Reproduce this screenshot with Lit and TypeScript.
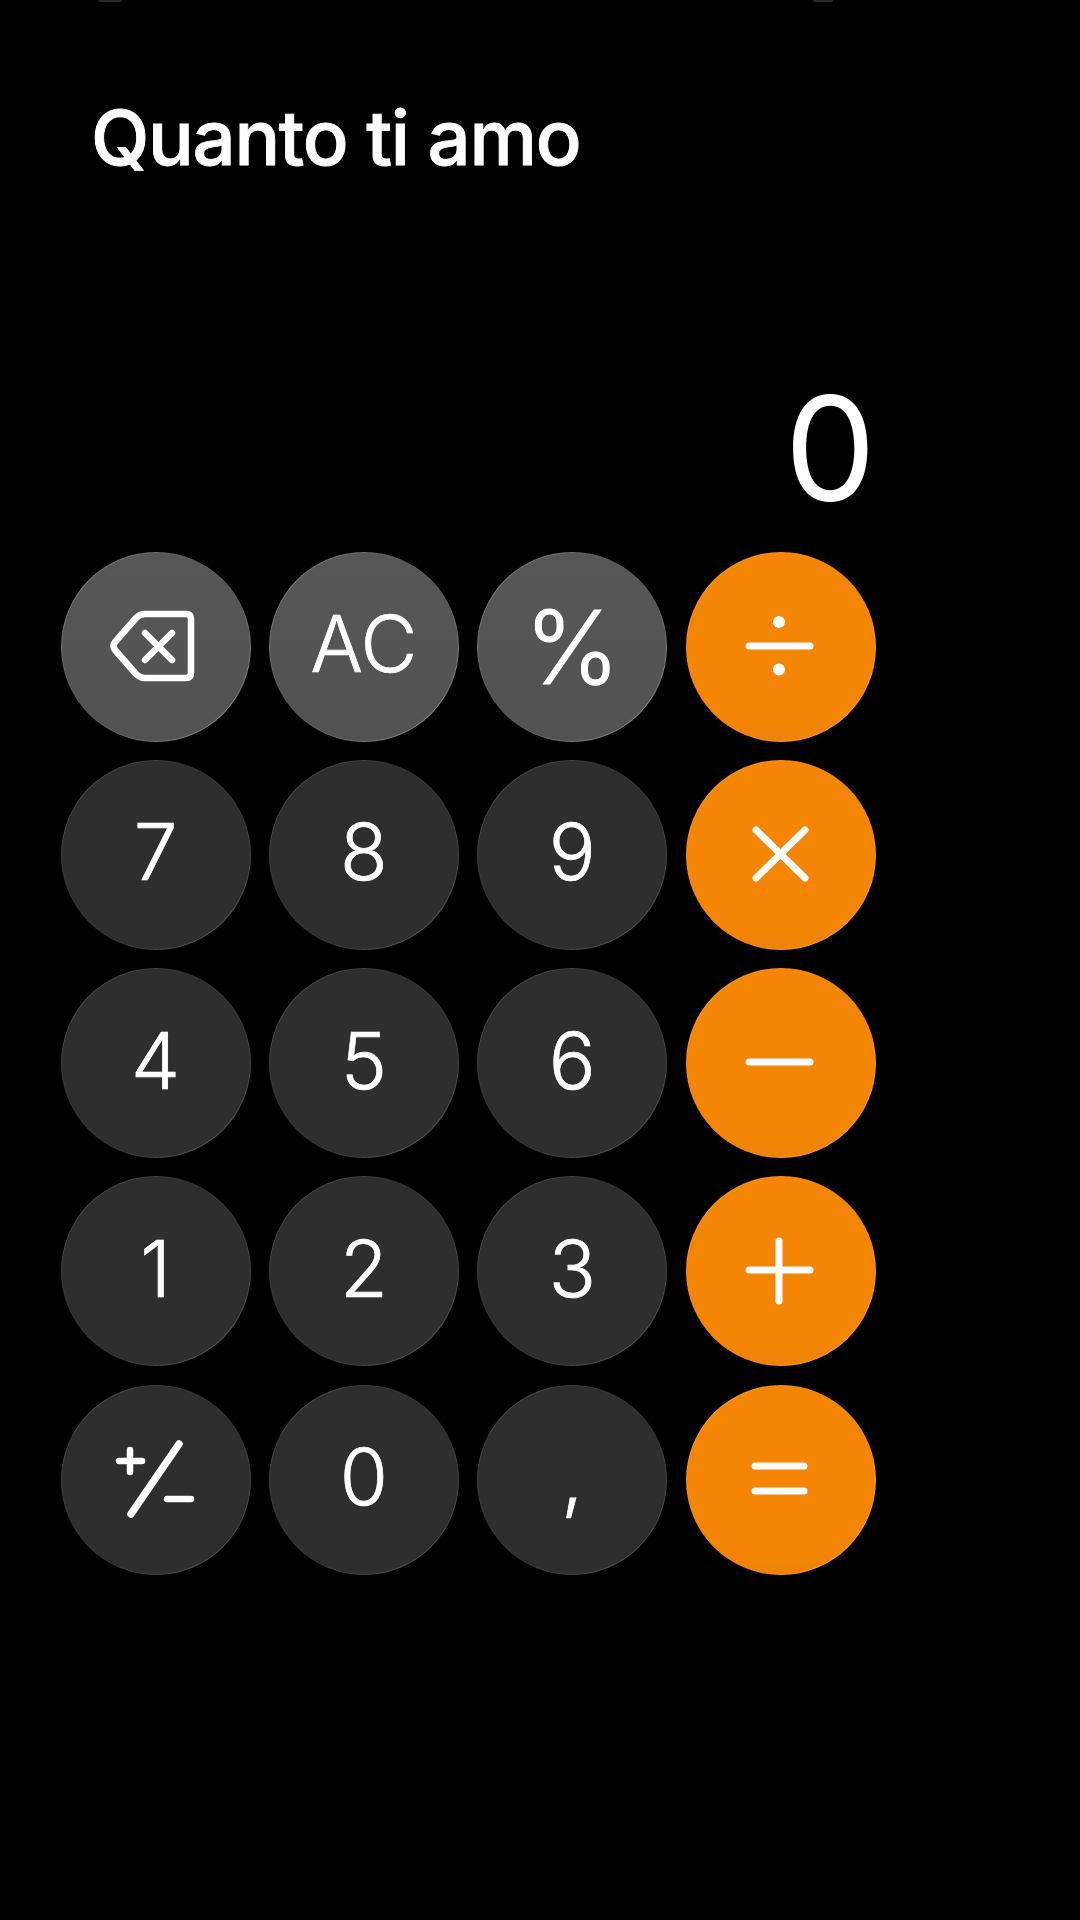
import { LitElement, html, css, svg } from 'lit';
import { customElement } from 'lit/decorators.js';

type Key = { kind: 'fn' | 'num' | 'op'; label?: string; icon?: unknown; cls?: string };

const line = (x1: number, y1: number, x2: number, y2: number, w = 7) =>
  svg`<line x1=${x1} y1=${y1} x2=${x2} y2=${y2} stroke="#fff" stroke-width=${w} stroke-linecap="round"></line>`;

const dot = (cx: number, cy: number, r: number) => svg`<circle cx=${cx} cy=${cy} r=${r} fill="#fff"></circle>`;

// all icons are drawn in the 190x190 box of the key
const icons = {
  back: svg`
    <path d="M55 91 L76 67 Q80 63 85 63 H126 Q131 63 131 68 V122 Q131 127 126 127 H85 Q80 127 76 123 L55 99 Q52 95 55 91 Z" fill="none" stroke="#fff" stroke-width="6.5" stroke-linejoin="round"></path>
    ${line(85, 82, 112, 109, 6.5)}
    ${line(112, 82, 85, 109, 6.5)}`,
  plusMinus: svg`
    ${line(59, 77, 82, 77, 6.5)}
    ${line(70, 66, 70, 88, 6.5)}
    ${line(119, 60, 71, 130, 7.5)}
    ${line(107, 115, 131, 115, 6.5)}`,
  div: svg`${line(64, 95, 125, 95)}${dot(94, 71, 6)}${dot(94, 118.5, 6)}`,
  mul: svg`${line(71, 71, 120, 119, 7)}${line(120, 71, 71, 119, 7)}`,
  minus: svg`${line(64, 94, 125, 94)}`,
  plus: svg`${line(64, 94, 125, 94)}${line(94, 65, 94, 125)}`,
  eq: svg`${line(70, 82, 119, 82)}${line(70, 107, 119, 107)}`,
};

const keys: Key[] = [
  { kind: 'fn', icon: icons.back },
  { kind: 'fn', label: 'AC' },
  { kind: 'fn', label: '%', cls: 'pct' },
  { kind: 'op', icon: icons.div },
  { kind: 'num', label: '7' },
  { kind: 'num', label: '8' },
  { kind: 'num', label: '9' },
  { kind: 'op', icon: icons.mul },
  { kind: 'num', label: '4' },
  { kind: 'num', label: '5' },
  { kind: 'num', label: '6' },
  { kind: 'op', icon: icons.minus },
  { kind: 'num', label: '1' },
  { kind: 'num', label: '2' },
  { kind: 'num', label: '3' },
  { kind: 'op', icon: icons.plus },
  { kind: 'num', icon: icons.plusMinus },
  { kind: 'num', label: '0' },
  { kind: 'num', label: ',' },
  { kind: 'op', icon: icons.eq },
];

@customElement('app-root')
export class AppRoot extends LitElement {
  static styles = css`
    :host {
      display: block;
      position: relative;
      width: 1080px;
      height: 1920px;
      background: #000;
      color: #fff;
      font-family: Inter, 'Noto Sans', sans-serif;
      overflow: hidden;
    }

    .notch {
      position: absolute;
      top: 0;
      width: 24px;
      height: 2px;
      border-radius: 0 0 8px 8px;
      background: #2a2a2a;
    }

    .notch.left {
      left: 98px;
    }

    .notch.right {
      left: 813px;
      width: 20px;
    }

    .title {
      margin: 0;
      padding: 97px 0 0 91px;
      font-size: 76px;
      font-weight: 500;
      -webkit-text-stroke: 0.9px #fff;
      line-height: 80px;
      letter-spacing: -1.3px;
    }

    .display {
      margin-top: 208px;
      width: 876px;
      box-sizing: border-box;
      text-align: right;
      font-size: 145px;
      font-weight: 400;
      line-height: 128px;
    }

    .pad {
      display: grid;
      grid-template-columns: repeat(4, 190px);
      grid-auto-rows: 190px;
      gap: 18.25px 18.4px;
      margin: 38.5px 0 0 60.5px;
    }

    .key {
      display: flex;
      align-items: center;
      justify-content: center;
      box-sizing: border-box;
      width: 190px;
      height: 190px;
      padding-bottom: 5px;
      border-radius: 50%;
      border: 1.5px solid transparent;
      font-size: 78px;
      font-weight: 300;
      -webkit-text-stroke: 0.7px #fff;
      line-height: 1;
      position: relative;
    }

    .key svg {
      position: absolute;
      left: -1.5px;
      top: -1.5px;
      width: 190px;
      height: 190px;
    }

    .fn {
      background: linear-gradient(180deg, #575757, #525252) padding-box,
        linear-gradient(135deg, #909090, #5c5c5c 35%, #5c5c5c 60%, #9a9a9a) border-box;
    }

    .num {
      background: linear-gradient(#2e2e2e, #2e2e2e) padding-box,
        linear-gradient(135deg, #565656, #363636 35%, #363636 60%, #606060) border-box;
    }

    .op {
      background: linear-gradient(180deg, #f58505 85%, #ee8208) padding-box,
        linear-gradient(135deg, #fbb02c, #f58505 35%, #f58505 60%, #fbb02c) border-box;
    }

    .pct {
      font-size: 102px;
      padding-bottom: 0;
      -webkit-text-stroke: 1px #fff;
    }
  `;

  render() {
    return html`
      <div class="notch left"></div>
      <div class="notch right"></div>
      <h1 class="title">Quanto ti amo</h1>
      <div class="display">0</div>
      <div class="pad">
        ${keys.map(
          (k) => html`
            <div class="key ${k.kind} ${k.cls ?? ''}">
              ${k.label ?? html`<svg viewBox="0 0 190 190">${k.icon}</svg>`}
            </div>
          `
        )}
      </div>
    `;
  }
}
